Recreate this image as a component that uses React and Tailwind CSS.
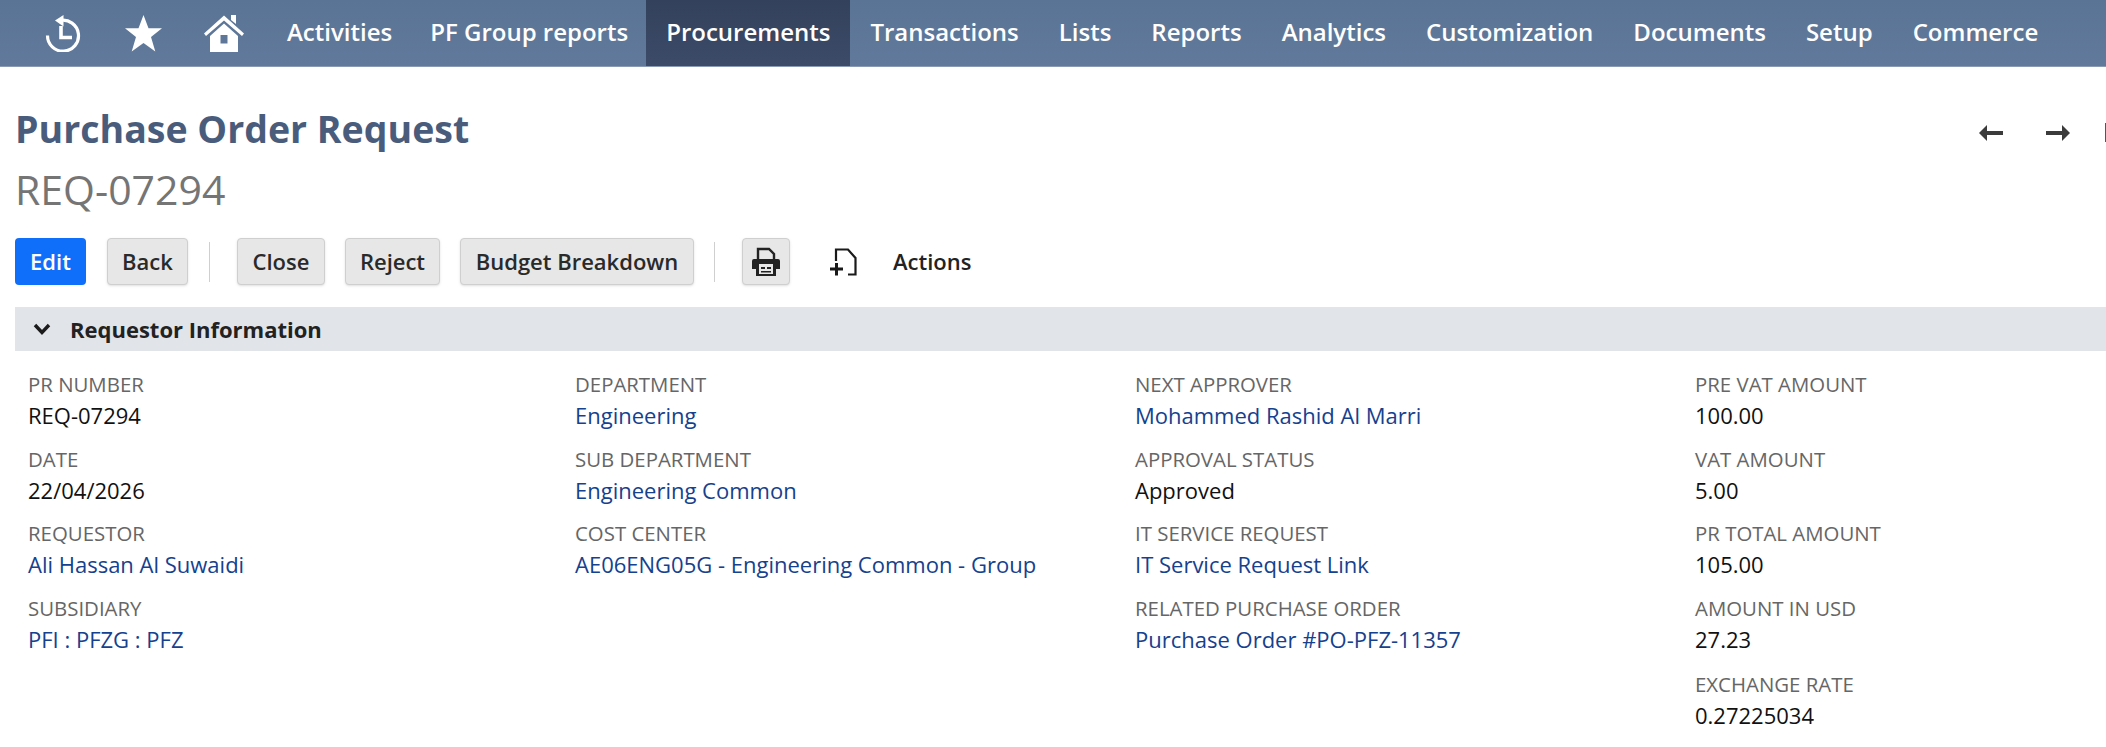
import React from 'react';

const navItems = ['Activities', 'PF Group reports', 'Procurements', 'Transactions', 'Lists', 'Reports', 'Analytics', 'Customization', 'Documents', 'Setup', 'Commerce'];

const HistoryIcon = () => (
  <svg width="38" height="38" viewBox="0 0 38 38" fill="none" stroke="white">
    <path d="M15 6.5a15.5 15.5 0 1 1-12.5 15" strokeWidth="3.2" />
    <path d="M18.5 1v11.500L10 6.500z" fill="white" stroke="none" />
    <path d="M16 12v11.500h11" strokeWidth="3.600" />
  </svg>
);

const StarIcon = () => (
  <svg width="37" height="37" viewBox="0 0 37 37" fill="white">
    <path d="M18.500 0l5 13.300h13.500l-11 8.700 4.300 14.500-11.800-8.600-11.800 8.600 4.300-14.500-11-8.700h13.500z" />
  </svg>
);

const HomeIcon = () => (
  <svg width="40" height="38" viewBox="0 0 40 38" fill="white">
    <path d="M27 1h5v9l-5-4z" />
    <path d="M20 1.500L40 19.500l-2 2.500L20 6.500 2 22l-2-2.500z" />
    <path fillRule="evenodd" d="M20 9.500l14 12.500v16H6V22zM16.500 21v8.500h7V21z" />
  </svg>
);

const ArrowLeft = () => (
  <svg className="shrink-0" width="25" height="18" viewBox="0 0 25 18" fill="#3b3b3b">
    <path d="M0 9l8-8v6h16v4H8v6z" />
  </svg>
);

const ArrowRight = () => (
  <svg className="shrink-0" width="25" height="18" viewBox="0 0 25 18" fill="#3b3b3b">
    <path d="M25 9l-8-8v6H1v4h16v6z" />
  </svg>
);

const PrintIcon = () => (
  <svg width="28" height="30" viewBox="0 0 28 30">
    <path d="M6 12V2h11l5 5v5" fill="none" stroke="#222" strokeWidth="2.400" />
    <path fillRule="evenodd" d="M2 12h24a2 2 0 0 1 2 2v8h-4v7H4v-7H0v-8a2 2 0 0 1 2-2zM7 17v10h14V17z" fill="#222" />
    <path d="M9 20h4v2H9zM15 20h4v2h-4zM9 24h10v1.500H9z" fill="#222" />
  </svg>
);

const DocPlusIcon = () => (
  <svg width="27" height="28" viewBox="0 0 27 28" fill="none" stroke="#1a1a1a" strokeWidth="2.200">
    <path d="M6 13V1.500h12l7.500 8.500v16.500H18" />
    <path d="M0 21h13M6.500 15v12.500" strokeWidth="3" />
  </svg>
);

const ChevronIcon = () => (
  <svg width="18" height="12" viewBox="0 0 18 12" fill="none" stroke="#1b1b1b" strokeWidth="3.400">
    <path d="M2 2l7 7.500L16 2" />
  </svg>
);

const Btn = ({ children, className }) => (
  <button type="button" className={`h-[47px] flex items-center justify-center rounded-[4px] border border-[#cfcfcf] bg-[#e7e7e7] text-[22px] font-semibold text-[#2a2a2a] shadow-sm ${className}`}>
    {children}
  </button>
);

const Field = ({ label, value, link, className }) => (
  <div className={`flex flex-col ${className || ''}`}>
    <div className="h-[30px] leading-[30px] text-[20.4px] text-[#666]">{label}</div>
    <div className={`h-[32px] leading-[32px] text-[22px] ${link ? 'text-[#15418e]' : 'text-[#111]'}`}>{value}</div>
  </div>
);

export default function App() {
  return (
    <div className="w-[2106px] h-[747px] overflow-hidden bg-white font-['Open_Sans',sans-serif]">
      <nav className="h-[67px] flex pl-[25px] border-b border-[#8a9ab5] bg-gradient-to-b from-[#5a7496] to-[#617a9c]">
        <div className="flex items-center px-5"><HistoryIcon /></div>
        <div className="flex items-center pl-[22px] pr-5"><StarIcon /></div>
        <div className="flex items-center pl-[22px] pr-[23px]"><HomeIcon /></div>
        {navItems.map((item, i) => (
          <div
            key={item}
            className={`flex items-center pl-5 pb-[2px] text-[24px] font-semibold text-white whitespace-nowrap ${i < 2 ? 'pr-[18px]' : 'pr-5'} ${item === 'Procurements' ? 'bg-gradient-to-b from-[#33415c] to-[#3c4b68]' : ''}`}
          >
            {item}
          </div>
        ))}
      </nav>

      <main className="px-[15px]">
        <div className="flex justify-between pt-[36px]">
          <div>
            <h1 className="h-[52px] leading-[52px] text-[37.500px] font-bold text-[#4a5c7c]">Purchase Order Request</h1>
            <div className="mt-[8px] h-[52px] leading-[52px] text-[41px] text-[#757575]">REQ-07294</div>
          </div>
          <div className="flex pt-[19px] h-[40px] items-center -mr-[15px] w-[127px] shrink-0">
            <ArrowLeft />
            <div className="ml-[41px]"><ArrowRight /></div>
            <div className="ml-[35px] shrink-0 w-[2px] h-[19px] bg-[#555]" />
          </div>
        </div>

        <div className="mt-[23px] flex items-center">
          <button type="button" className="h-[47px] w-[71px] rounded-[4px] bg-[#0f6ffa] text-[22px] font-semibold text-white">Edit</button>
          <Btn className="ml-[21px] w-[81px]">Back</Btn>
          <div className="ml-[21px] w-px h-[40px] bg-[#cfcfcf]" />
          <Btn className="ml-[27px] w-[88px]">Close</Btn>
          <Btn className="ml-[20px] w-[95px]">Reject</Btn>
          <Btn className="ml-[20px] w-[234px]">Budget Breakdown</Btn>
          <div className="ml-[20px] w-px h-[40px] bg-[#cfcfcf]" />
          <Btn className="ml-[27px] w-[48px]"><PrintIcon /></Btn>
          <div className="ml-[40px]"><DocPlusIcon /></div>
          <span className="ml-[36px] text-[22px] font-semibold text-[#222]">Actions</span>
        </div>

        <div className="mt-[22px] h-[44px] -mr-[15px] flex items-center pl-[18px] bg-[#e1e4e9]">
          <ChevronIcon />
          <span className="ml-[19px] text-[22px] font-bold text-[#222]">Requestor Information</span>
        </div>

        <div className="pt-[18px] pl-[13px] grid grid-cols-[547px_560px_560px_1fr]">
          <div className="flex flex-col gap-[12.500px]">
            <Field label="PR NUMBER" value="REQ-07294" />
            <Field label="DATE" value="22/04/2026" />
            <Field label="REQUESTOR" value="Ali Hassan Al Suwaidi" link />
            <Field label="SUBSIDIARY" value="PFI : PFZG : PFZ" link />
          </div>
          <div className="flex flex-col gap-[12.500px]">
            <Field label="DEPARTMENT" value="Engineering" link />
            <Field label="SUB DEPARTMENT" value="Engineering Common" link />
            <Field label="COST CENTER" value="AE06ENG05G - Engineering Common - Group" link />
          </div>
          <div className="flex flex-col gap-[12.500px]">
            <Field label="NEXT APPROVER" value="Mohammed Rashid Al Marri" link />
            <Field label="APPROVAL STATUS" value="Approved" />
            <Field label="IT SERVICE REQUEST" value="IT Service Request Link" link />
            <Field label="RELATED PURCHASE ORDER" value="Purchase Order #PO-PFZ-11357" link />
          </div>
          <div className="flex flex-col gap-[12.500px]">
            <Field label="PRE VAT AMOUNT" value="100.00" />
            <Field label="VAT AMOUNT" value="5.00" />
            <Field label="PR TOTAL AMOUNT" value="105.00" />
            <Field label="AMOUNT IN USD" value="27.23" />
            <Field label="EXCHANGE RATE" value="0.27225034" className="mt-[1.500px]" />
          </div>
        </div>
      </main>
    </div>
  );
}
